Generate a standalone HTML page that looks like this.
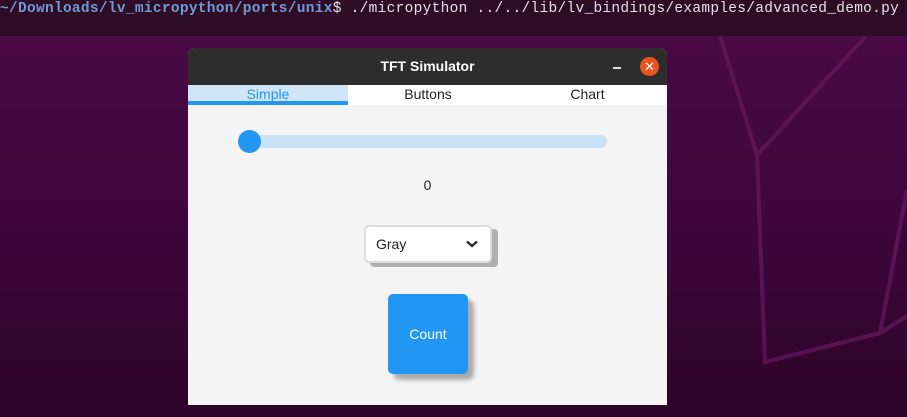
<!DOCTYPE html>
<html><head><meta charset="utf-8"><style>
*{margin:0;padding:0;box-sizing:border-box}
body{width:907px;height:417px;overflow:hidden;position:relative;background:linear-gradient(180deg,#4b0a47 0%,#3c0639 60%,#2e0429 100%);font-family:"Liberation Sans",sans-serif}
.term{position:absolute;left:0;top:0;width:907px;height:36px;background:#2f0c26;font-family:"Liberation Mono","DejaVu Sans Mono",monospace;font-size:14.5px;letter-spacing:0.29px;color:#e8e0e4;white-space:nowrap;line-height:18px}
.term b{color:#6f9ad6;font-weight:bold}
.win{position:absolute;left:188px;top:48px;width:479px;height:357px;background:#f4f4f4;border-radius:7px 7px 0 0;overflow:hidden}
.tb{height:37px;background:#2d2d2d;color:#fff;font-weight:bold;font-size:14px;text-align:center;line-height:37px;position:relative}
.min{position:absolute;left:425px;top:19px;width:8px;height:1.5px;background:#ddd}
.cls{position:absolute;left:452px;top:9px;width:19px;height:19px;border-radius:50%;background:#e95420;color:#fff;font-size:13px;line-height:19px;text-align:center;font-weight:normal}
.tabs{height:20px;background:#fff;position:relative;font-size:14px}
.tab{position:absolute;top:0;height:20px;line-height:19px;text-align:center;color:#222}
.slider{position:absolute;left:50px;top:87px;width:369px;height:13px;border-radius:7px;background:#cae2f6}
.knob{position:absolute;left:50px;top:82px;width:23px;height:23px;border-radius:50%;background:#2196f3}
</style></head><body>
<svg style="position:absolute;left:0;top:0" width="907" height="417">
<g stroke="#6a1a62" stroke-width="4" fill="none" opacity="0.65">
<polyline points="720,36 757,155 765,362 880,333 907,316"/>
<line x1="757" y1="155" x2="866" y2="36"/>
<line x1="880" y1="333" x2="907" y2="190"/>
</g></svg>
<div class="term"><b>~/Downloads/lv_micropython/ports/unix</b>$ ./micropython ../../lib/lv_bindings/examples/advanced_demo.py</div>
<div class="win">
<div class="tb">TFT Simulator<div class="min"></div><div class="cls">✕</div></div>
<div class="tabs">
<div class="tab" style="left:0;width:160px;background:#cfe6f8;color:#2196f3">Simple</div>
<div style="position:absolute;left:0;top:16px;width:160px;height:4px;background:#2196f3"></div>
<div class="tab" style="left:160px;width:160px">Buttons</div>
<div class="tab" style="left:320px;width:159px">Chart</div>
</div>
<div class="slider"></div><div class="knob"></div>
<div style="position:absolute;left:0;width:479px;top:129px;text-align:center;font-size:14px;color:#222">0</div>
<div style="position:absolute;left:182px;top:181px;width:128px;height:38px;background:#b0b0b0;border-radius:4px"></div>
<div style="position:absolute;left:176px;top:177px;width:128px;height:38px;background:#fff;border:2px solid #ddd;border-radius:5px;font-size:14px;color:#222;line-height:34px;padding-left:10px">Gray
<svg style="position:absolute;right:12px;top:13px" width="12" height="8"><path d="M1 1.5L6 6L11 1.5" stroke="#222" stroke-width="2.2" fill="none"/></svg></div>
<div style="position:absolute;left:206px;top:252px;width:80px;height:80px;background:#aaa;border-radius:6px;filter:blur(2px)"></div>
<div style="position:absolute;left:200px;top:246px;width:80px;height:80px;background:#2196f3;border-radius:5px;color:#fff;font-size:14px;text-align:center;line-height:80px">Count</div>
</div>
</body></html>
